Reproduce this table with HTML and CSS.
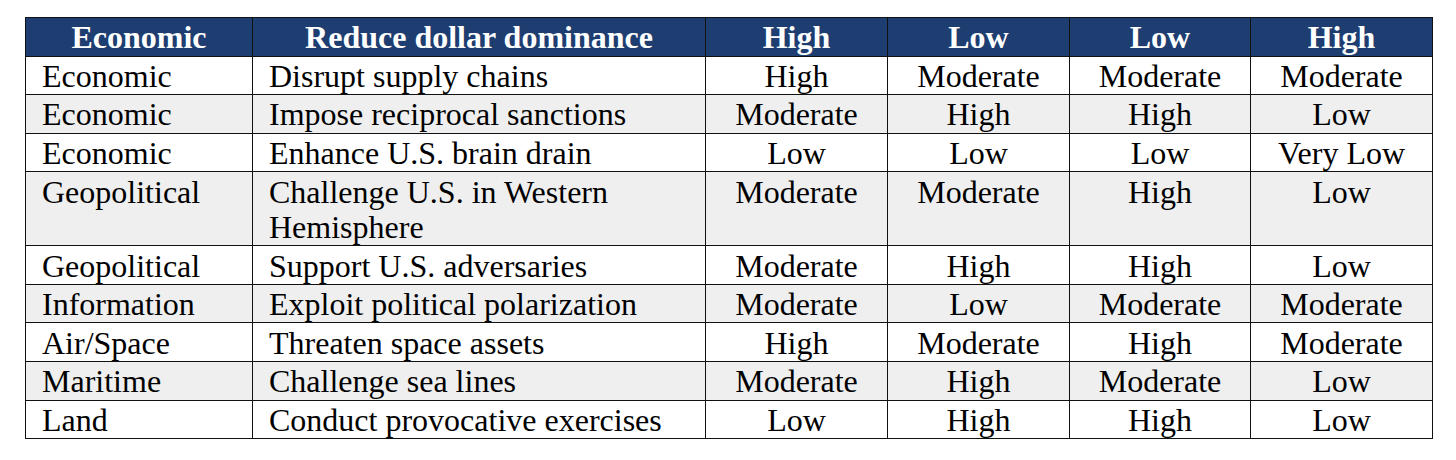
FILE: index.html
```html
<!DOCTYPE html>
<html lang="en">
<head>
<meta charset="utf-8">
<title>Table</title>
<link rel="stylesheet" href="styles.css">
</head>
<body>
<div class="page">
  <table class="matrix">
    <colgroup>
      <col class="c-domain">
      <col class="c-action">
      <col class="c-val">
      <col class="c-val">
      <col class="c-val2">
      <col class="c-val">
    </colgroup>
    <thead>
      <tr>
        <th>Economic</th>
        <th>Reduce dollar dominance</th>
        <th>High</th>
        <th>Low</th>
        <th>Low</th>
        <th>High</th>
      </tr>
    </thead>
    <tbody>
      <tr><td>Economic</td><td>Disrupt supply chains</td><td>High</td><td>Moderate</td><td>Moderate</td><td>Moderate</td></tr>
      <tr><td>Economic</td><td>Impose reciprocal sanctions</td><td>Moderate</td><td>High</td><td>High</td><td>Low</td></tr>
      <tr><td>Economic</td><td>Enhance U.S. brain drain</td><td>Low</td><td>Low</td><td>Low</td><td>Very Low</td></tr>
      <tr><td>Geopolitical</td><td>Challenge U.S. in Western Hemisphere</td><td>Moderate</td><td>Moderate</td><td>High</td><td>Low</td></tr>
      <tr><td>Geopolitical</td><td>Support U.S. adversaries</td><td>Moderate</td><td>High</td><td>High</td><td>Low</td></tr>
      <tr><td>Information</td><td>Exploit political polarization</td><td>Moderate</td><td>Low</td><td>Moderate</td><td>Moderate</td></tr>
      <tr><td>Air/Space</td><td>Threaten space assets</td><td>High</td><td>Moderate</td><td>High</td><td>Moderate</td></tr>
      <tr><td>Maritime</td><td>Challenge sea lines</td><td>Moderate</td><td>High</td><td>Moderate</td><td>Low</td></tr>
      <tr><td>Land</td><td>Conduct provocative exercises</td><td>Low</td><td>High</td><td>High</td><td>Low</td></tr>
    </tbody>
  </table>
</div>
</body>
</html>
```

FILE: styles.css
```css
html, body {
  margin: 0;
  padding: 0;
  background: #ffffff;
}

.page {
  padding: 17px 0 0 25px;
}

.matrix {
  border-collapse: collapse;
  table-layout: fixed;
  width: 1407px;
  font-family: "Liberation Serif", "Times New Roman", serif;
  font-size: 32px;
  color: #000;
}

.c-domain { width: 227px; }
.c-action { width: 453px; }
.c-val { width: 182px; }
.c-val2 { width: 181px; }

.matrix th,
.matrix td {
  border: 1.3px solid #111;
  line-height: 35.3px;
  padding: 2.3px 16px 0 16px;
  vertical-align: top;
  text-align: center;
  font-family: "Liberation Serif", "Times New Roman", serif;
  font-weight: 400;
}

.matrix th {
  background: #1e3d70;
  color: #ffffff;
  font-weight: 700;
}

.matrix td:nth-child(1),
.matrix td:nth-child(2) {
  text-align: left;
}

.matrix tbody tr:nth-child(even) td {
  background: #efefef;
}
```
